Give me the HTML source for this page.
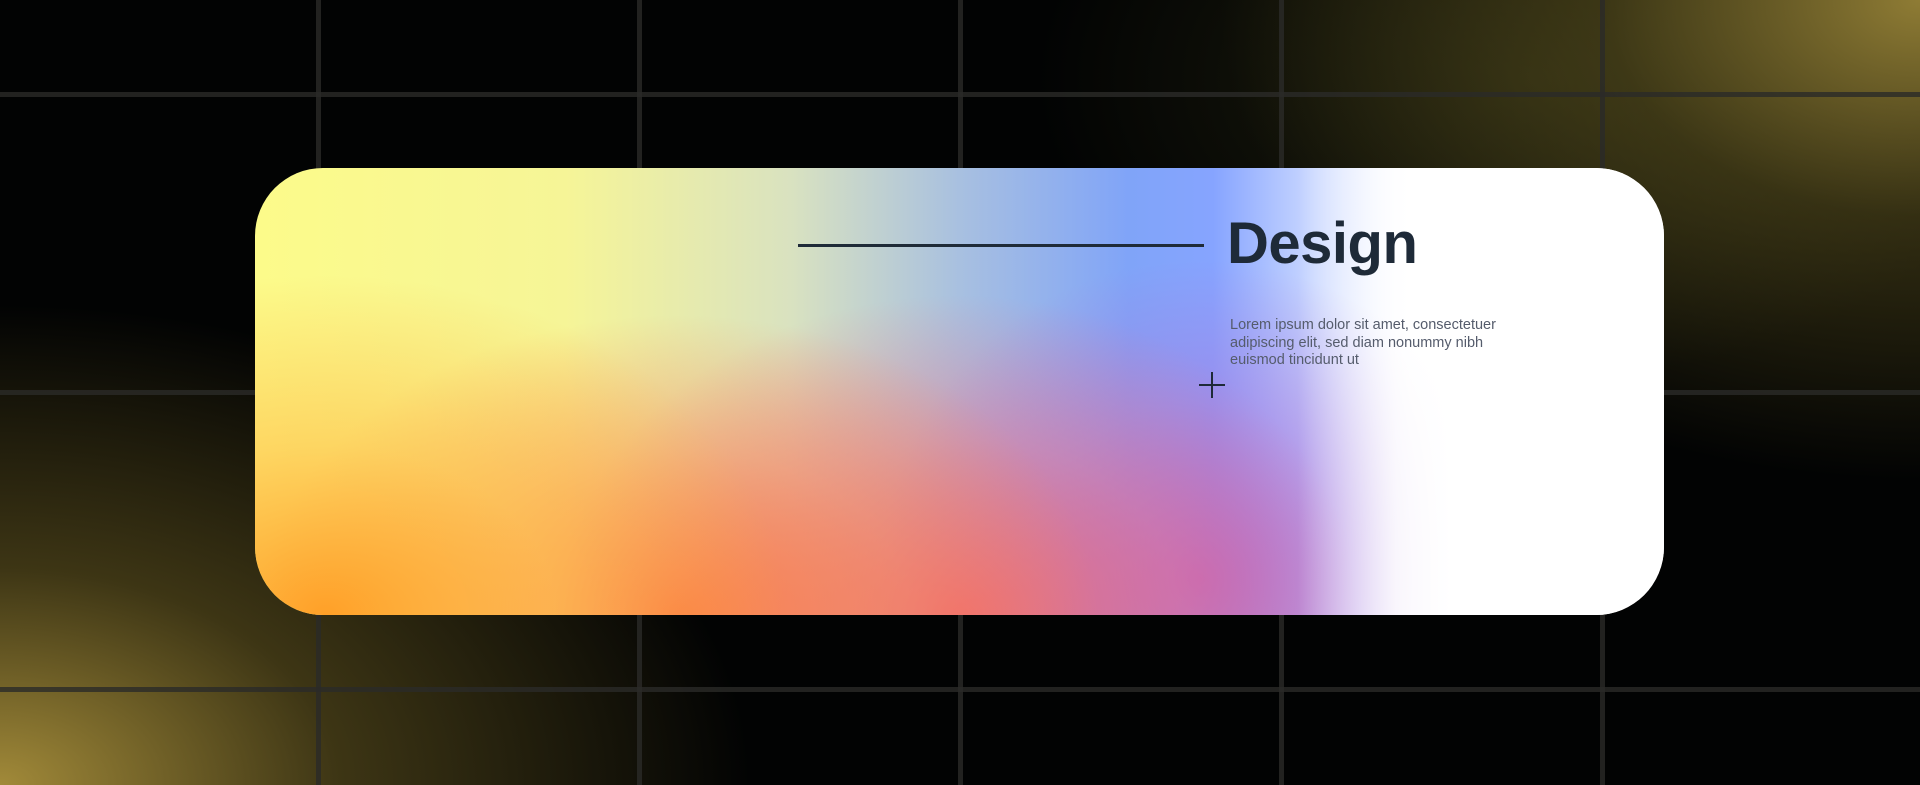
<!DOCTYPE html>
<html><head><meta charset="utf-8"><style>
html,body{margin:0;padding:0;}
body{width:1920px;height:785px;overflow:hidden;position:relative;background:#000;font-family:"Liberation Sans",sans-serif;}
.bg{position:absolute;inset:0;background:
radial-gradient(ellipse 750px 480px at 0% 100%, rgba(170,145,60,0.95), rgba(110,95,35,0.55) 45%, rgba(0,0,0,0) 100%),
radial-gradient(ellipse 700px 480px at 100% 0%, rgba(150,130,55,0.95), rgba(90,80,30,0.55) 45%, rgba(0,0,0,0) 100%),
radial-gradient(ellipse 500px 300px at 80% 10%, rgba(60,60,25,0.5), rgba(0,0,0,0) 100%),
#020303;}
.v{position:absolute;top:0;bottom:0;width:5px;background:rgba(42,42,40,0.8);}
.h{position:absolute;left:0;right:0;height:5px;background:rgba(42,42,40,0.8);}
.card{position:absolute;left:255px;top:168px;width:1409px;height:447px;border-radius:68px;overflow:hidden;
background:linear-gradient(to right,#fcfb8a 0%,#f6f597 22%,#d9e2c0 38%,#a8c0e0 50%,#80a4f8 62%,#86a4ff 68%,#c8d6ff 75%,#fff 82%);}
.warm{position:absolute;inset:0;background:
radial-gradient(ellipse 460px 340px at 5% 100%, rgba(255,160,40,1), rgba(255,190,70,0.6) 50%, rgba(255,220,100,0) 100%),
radial-gradient(ellipse 420px 300px at 30% 100%, rgba(250,120,70,1), rgba(250,140,90,0.5) 55%, rgba(250,150,100,0) 100%),
radial-gradient(ellipse 400px 320px at 50% 100%, rgba(240,100,110,0.95), rgba(235,120,140,0.5) 55%, rgba(235,130,150,0) 100%),
radial-gradient(ellipse 320px 320px at 67% 92%, rgba(180,100,200,1), rgba(170,120,220,0.5) 55%, rgba(170,130,230,0) 100%);}
.white{position:absolute;inset:0;background:linear-gradient(to right,rgba(255,255,255,0) 74%,rgba(255,255,255,0.85) 81%,#fff 85%);}
.line{position:absolute;left:798px;top:244px;width:406px;height:3px;background:#1f2b38;}
.t{position:absolute;left:1227px;top:210px;font-size:58px;font-weight:bold;color:#1e2a38;letter-spacing:-0.5px;}
.p{position:absolute;left:1230px;top:317px;font-size:14.5px;line-height:17.5px;color:#555c6c;width:298px;}
.plus{position:absolute;left:1199px;top:372px;width:26px;height:26px;}
.plus:before{content:"";position:absolute;left:12px;top:0;width:2px;height:26px;background:#1e2a38;}
.plus:after{content:"";position:absolute;top:12px;left:0;height:2px;width:26px;background:#1e2a38;}
</style></head><body>
<div class="bg"></div>
<div class="v" style="left:316px"></div>
<div class="v" style="left:637px"></div>
<div class="v" style="left:958px"></div>
<div class="v" style="left:1279px"></div>
<div class="v" style="left:1600px"></div>
<div class="h" style="top:92px"></div>
<div class="h" style="top:390px"></div>
<div class="h" style="top:687px"></div>
<div class="card"><div class="warm"></div><div class="white"></div></div>
<div class="line"></div>
<div class="t">Design</div>
<div class="p">Lorem ipsum dolor sit amet, consectetuer adipiscing elit, sed diam nonummy nibh euismod tincidunt ut</div>
<div class="plus"></div>
</body></html>
